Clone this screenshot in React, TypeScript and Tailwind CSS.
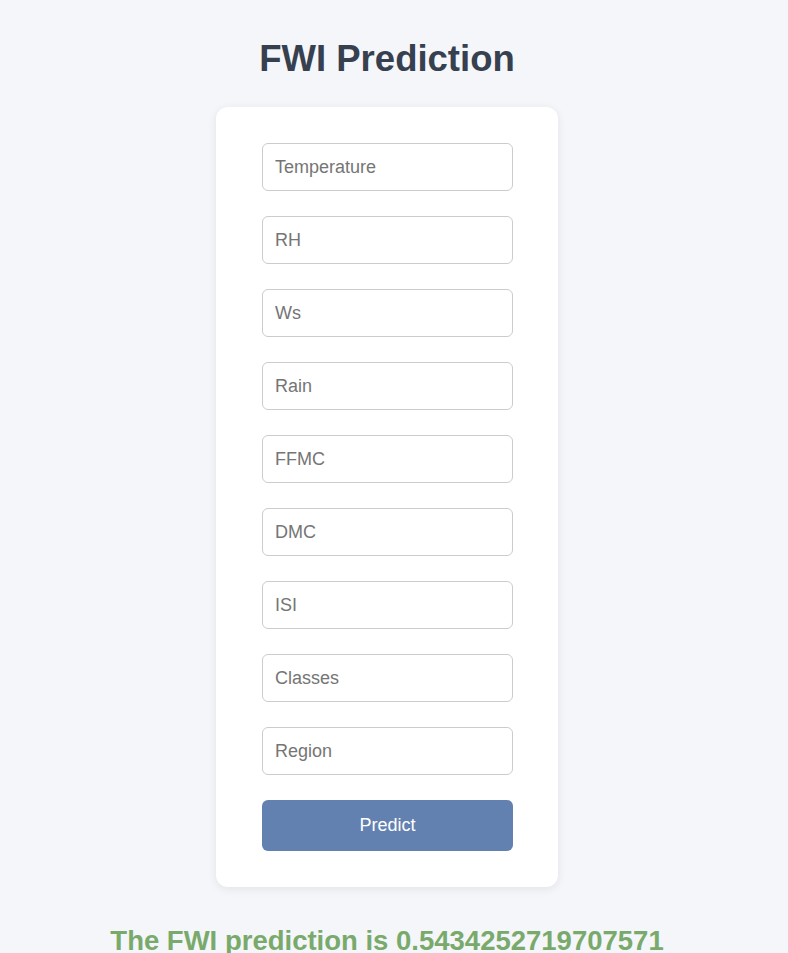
import React from "react";

const fields = ["Temperature", "RH", "Ws", "Rain", "FFMC", "DMC", "ISI", "Classes", "Region"];

export default function App() {
  return (
    <div
      className="min-h-[953px] bg-[#f4f6fa] flex flex-col items-center pr-[14px]"
      style={{ fontFamily: '"Liberation Sans", Arial, sans-serif' }}
    >
      <h1 className="mt-[37px] text-[36.5px] leading-[44px] font-bold text-[#36404f]">FWI Prediction</h1>
      <div className="mt-[26px] w-[342px] bg-white rounded-[12px] shadow-[0_2px_10px_rgba(0,0,0,0.08)] pl-[46px] pr-[45px] py-[36px]">
        <form className="flex flex-col gap-[25px]" onSubmit={(e) => e.preventDefault()}>
          {fields.map((f) => (
            <input
              key={f}
              placeholder={f}
              className="h-[48px] w-full border border-[#cccccc] rounded-[6px] px-[12px] text-[18px] text-[#333] placeholder:text-[#757575] outline-none bg-white"
            />
          ))}
          <button
            type="submit"
            className="h-[51px] w-full rounded-[6px] bg-[#6381b0] text-white text-[18px]"
          >
            Predict
          </button>
        </form>
      </div>
      <h2 className="mt-[38px] text-[27.5px] leading-[32px] font-bold text-[#79aa6c] whitespace-nowrap">
        The FWI prediction is 0.5434252719707571
      </h2>
    </div>
  );
}
